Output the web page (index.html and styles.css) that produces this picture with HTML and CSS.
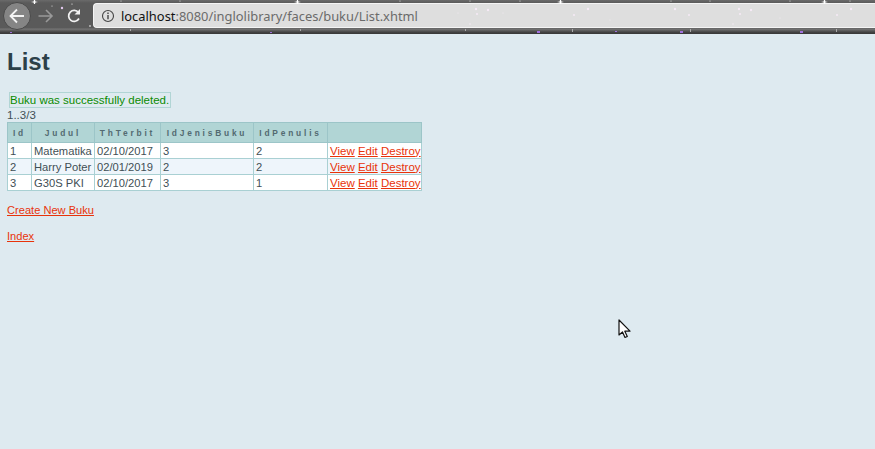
FILE: index.html
```html
<!DOCTYPE html>
<html lang="en">
<head>
<meta charset="utf-8">
<title>List</title>
<link rel="stylesheet" href="styles.css">
</head>
<body>
<header class="toolbar">
  <nav class="nav-buttons">
    <span class="back-button">
      <svg width="20" height="20" viewBox="0 0 20 20" aria-hidden="true"><path d="M17 10H4M10 3.500 3.500 10l6.500 6.500" fill="none" stroke="#f2f2f2" stroke-width="1.800"/></svg>
    </span>
    <svg class="forward" width="18" height="18" viewBox="0 0 18 18" aria-hidden="true"><path d="M1.500 9h13M9 3l6 6-6 6" fill="none" stroke="#999" stroke-width="1.600"/></svg>
    <svg class="reload" width="16" height="16" viewBox="0 0 16 16" aria-hidden="true"><path d="M13 10.500A5.500 5.500 0 1 1 12.500 4.500" fill="none" stroke="#f2f2f2" stroke-width="1.700"/><path d="M14 1v5.500H8.500z" fill="#f2f2f2"/></svg>
  </nav>
  <div class="address">
    <svg class="info" width="14" height="14" viewBox="0 0 14 14" aria-hidden="true"><circle cx="7" cy="7" r="5.500" fill="none" stroke="#444" stroke-width="1.100"/><path d="M6.300 6h1.400v4.200H6.300zM6.300 3.600h1.400V5H6.300z" fill="#444"/></svg>
    <span class="url"><span class="host">localhost</span>:8080/inglolibrary/faces/buku/List.xhtml</span>
  </div>
  <svg class="stars" width="875" height="34" viewBox="0 0 875 34" aria-hidden="true">
    <g fill="#fff">
      <path d="M34 0h1l.4 1.500L38 2l-2.600.4-.4 1.600h-1l-.4-1.600L31 2l2.600-.500zM297 0h1l.4 1.500L301 2l-2.600.4-.4 1.600h-1l-.4-1.600L294 2l2.600-.500zM560 0h1l.4 1.500L564 2l-2.600.4-.4 1.600h-1l-.4-1.600L557 2l2.600-.500zM824 0h1l.4 1.500L828 2l-2.600.4-.4 1.600h-1l-.4-1.600L821 2l2.600-.500z"/>
      <circle cx="62" cy="8" r="1.200" fill="#e3c8ef"/><circle cx="90" cy="26" r=".8"/><circle cx="72" cy="4" r=".6"/><circle cx="52" cy="6" r=".5"/>
      <circle cx="121" cy="1" r=".5"/><circle cx="180" cy="1" r=".5"/><circle cx="400" cy="1" r=".5"/><circle cx="470" cy="1" r=".5"/><circle cx="520" cy="1" r=".5"/><circle cx="671" cy="1" r=".5"/><circle cx="710" cy="1" r=".5"/><circle cx="790" cy="1" r=".5"/><circle cx="850" cy="1" r=".5"/>
    </g>
    <g fill="#f6eaf6">
      <circle cx="476" cy="9" r="1.200"/><circle cx="488" cy="10" r="1.200"/><circle cx="588" cy="9" r="1.200"/><circle cx="675" cy="9" r="1.200"/><circle cx="739" cy="9" r="1.200"/><circle cx="751" cy="10" r="1.200"/><circle cx="851" cy="9" r="1.200"/>
      <circle cx="574" cy="15" r="1"/><circle cx="689" cy="15" r="1"/><circle cx="837" cy="15" r="1"/><circle cx="477" cy="14" r="1"/><circle cx="740" cy="14" r="1"/>
      <circle cx="470" cy="24" r=".7"/><circle cx="733" cy="24" r=".7"/><circle cx="458" cy="13" r=".5"/><circle cx="503" cy="13" r=".5"/><circle cx="610" cy="20" r=".5"/><circle cx="780" cy="18" r=".5"/>
    </g>
    <g fill="#a070e0">
      <rect x="537" y="31" width="3" height="2"/><rect x="680" y="31" width="3" height="2"/><rect x="800" y="31" width="3" height="2"/><rect x="10" y="32" width="2" height="1"/><rect x="270" y="32" width="2" height="1"/><rect x="615" y="31" width="2" height="1"/>
    </g>
    <g fill="#aaa">
      <rect x="130" y="29" width="1" height="2"/><rect x="300" y="29" width="1" height="2"/><rect x="465" y="29" width="1" height="2"/><rect x="572" y="29" width="1" height="3"/><rect x="690" y="29" width="1" height="3"/><rect x="836" y="29" width="1" height="3"/>
    </g>
  </svg>
</header>
<main class="page">
  <h1>List</h1>
  <div class="message">Buku was successfully deleted.</div>
  <div class="range">1..3/3</div>
  <table class="grid">
    <thead>
      <tr><th class="c1">Id</th><th class="c2">Judul</th><th class="c3">ThTerbit</th><th class="c4">IdJenisBuku</th><th class="c5">IdPenulis</th><th class="c6"></th></tr>
    </thead>
    <tbody>
      <tr><td>1</td><td>Matematika</td><td>02/10/2017</td><td>3</td><td>2</td><td class="actions"><a href="#">View</a> <a href="#">Edit</a> <a href="#">Destroy</a></td></tr>
      <tr class="alt"><td>2</td><td>Harry Poter</td><td>02/01/2019</td><td>2</td><td>2</td><td class="actions"><a href="#">View</a> <a href="#">Edit</a> <a href="#">Destroy</a></td></tr>
      <tr><td>3</td><td>G30S PKI</td><td>02/10/2017</td><td>3</td><td>1</td><td class="actions"><a href="#">View</a> <a href="#">Edit</a> <a href="#">Destroy</a></td></tr>
    </tbody>
  </table>
  <p class="link-row first"><a href="#">Create New Buku</a></p>
  <p class="link-row"><a href="#">Index</a></p>
</main>
<svg class="cursor" width="14" height="20" viewBox="0 0 14 20" aria-hidden="true"><path d="M1 1v15l3.500-3 2.500 5.500 2.300-1-2.500-5.300H12z" fill="#fff" stroke="#111" stroke-width="1.200" stroke-linejoin="round"/></svg>
</body>
</html>
```
FILE: styles.css
```css
* { box-sizing: border-box; }
html, body { margin: 0; height: 100%; }
body {
  background: #deeaf0;
  font-family: "Liberation Sans", Arial, sans-serif;
  font-size: 11.500px;
  color: #3f4f55;
  overflow: hidden;
  position: relative;
}
.toolbar {
  position: relative;
  height: 34px;
  display: flex;
  align-items: flex-start;
  padding-top: 3px;
  background: linear-gradient(#6a6a6a 0, #5a5a5a 3px, #5a5a5a 28px, #777 29px, #555 31px, #3a3a3a 33px, #3a3a3a 34px);
}
.stars { position: absolute; left: 0; top: 0; pointer-events: none; }
.nav-buttons {
  width: 93px;
  display: flex;
  align-items: center;
  height: 26px;
  padding-left: 3px;
}
.back-button {
  width: 28px;
  height: 28px;
  border-radius: 50%;
  background: #858585;
  border: 1px solid #4a4a4a;
  display: flex;
  align-items: center;
  justify-content: center;
  flex: none;
}
.forward { margin-left: 6px; flex: none; }
.reload { margin-left: 11px; flex: none; }
.address {
  flex: 1;
  height: 25px;
  background: #dedede;
  border: 1px solid #f4f4f4;
  border-right: 0;
  border-radius: 4px 0 0 4px;
  display: flex;
  align-items: center;
  padding-left: 7px;
}
.url {
  margin-left: 6px;
  font-family: "Noto Sans", "DejaVu Sans", sans-serif;
  font-size: 12.900px;
  color: #6b6b6b;
}
.host { color: #111; }
.page { padding: 0 7px; }
h1 {
  margin: 0;
  padding-top: 14px;
  font-size: 24px;
  line-height: 27px;
  font-weight: bold;
  color: #2c4048;
}
.message {
  display: inline-block;
  margin: 17px 0 0 2px;
  padding: 0 1px 0 0;
  border: 1px solid #b1d5d5;
  color: #0a8a00;
  line-height: 14px;
  vertical-align: top;
}
.range { line-height: 13px; margin-top: 1px; }
.grid {
  border-collapse: collapse;
  table-layout: fixed;
  width: 414px;
  background: #fff;
}
.c1 { width: 24px; }
.c2 { width: 63px; }
.c3 { width: 66px; }
.c4 { width: 93px; }
.c5 { width: 74px; }
.c6 { width: 94px; }
th {
  height: 20px;
  padding: 0;
  background: #b1d5d5;
  border: 1px solid #9cc5c8;
  color: #536a71;
  font-size: 8.400px;
  font-weight: bold;
  letter-spacing: 2.800px;
  text-align: center;
}
td {
  height: 16px;
  padding: 0 0 0 2px;
  border: 1px solid #a9d0d3;
  font-size: 11.200px;
  line-height: 14px;
  white-space: nowrap;
  overflow: hidden;
}
.alt td { background: #eef5fb; }
td.actions { padding-left: 2px; font-size: 11.500px; }
a { color: #e8330a; }
.link-row { margin: 13px 0 0; line-height: 13px; font-size: 11.100px; }
.cursor { position: absolute; left: 618px; top: 319px; }
```
